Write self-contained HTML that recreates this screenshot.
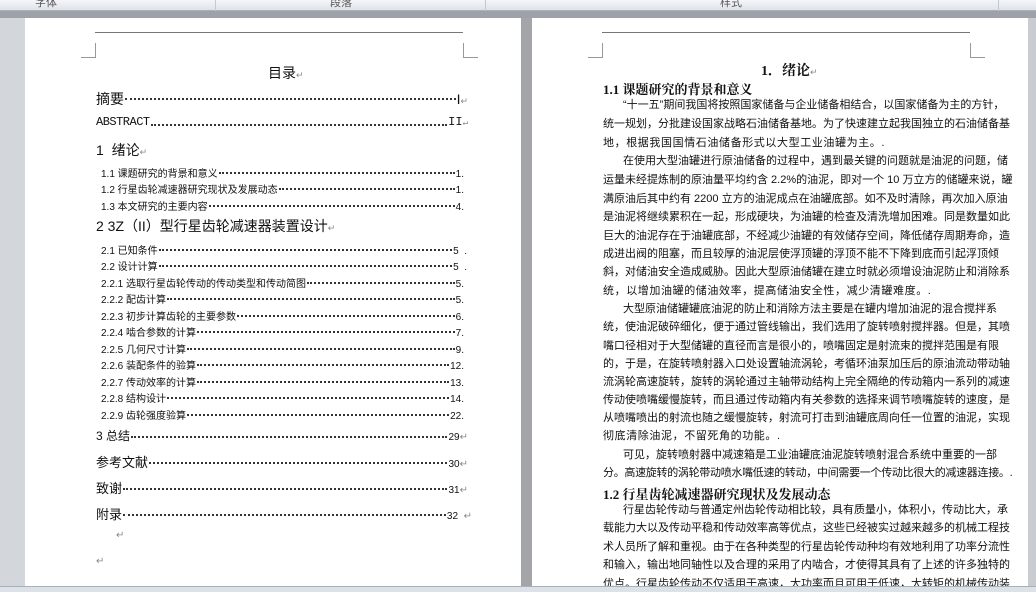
<!DOCTYPE html>
<html><head><meta charset="utf-8"><style>
*{margin:0;padding:0;box-sizing:border-box}
body{width:1036px;height:592px;overflow:hidden;background:#9ea2a8;position:relative;font-family:"Liberation Serif","Noto Serif CJK SC","Noto Sans CJK SC",serif;color:#111}
.tb{position:absolute;left:0;top:0;width:1036px;height:11px;background:linear-gradient(#f4f6f9,#dfe3e9);border-bottom:1px solid #a9b0ba}
.tb span{position:absolute;top:-6px;font-size:11px;color:#555;font-family:"Liberation Sans","Noto Sans CJK SC",sans-serif}
.sep{position:absolute;top:0;width:1px;height:11px;background:#c4c9d0}
.page{position:absolute;top:18px;height:568px;background:#fff}
.hl{position:absolute;height:1px;background:#777}
.crn{position:absolute;width:15px;height:15px;border-color:#999;border-style:solid}
.t{position:absolute;white-space:nowrap}
.toc{position:absolute;display:flex;align-items:baseline;white-space:nowrap;font-family:"Liberation Sans","Noto Sans CJK SC",sans-serif}
.toc .d{flex:1;overflow:hidden;border-bottom:2px dotted #333;height:0;margin:0 1px;align-self:center;position:relative;top:1px}
.s{font-size:10px;height:14px}
.b{font-size:14px;height:18px}
.r{font-family:"Liberation Sans","Noto Sans CJK SC",sans-serif;font-size:11px;position:absolute;left:603px;width:367px;white-space:nowrap;line-height:14px}
.j{text-align:justify;text-align-last:justify}
.status{position:absolute;left:0;top:586px;width:1036px;height:6px;background:#dde2e9;border-top:1px solid #a9b0ba}
</style></head><body>
<div class="tb"><span style="left:35px">字体</span><div class="sep" style="left:215px"></div><span style="left:330px">段落</span><div class="sep" style="left:485px"></div><span style="left:720px">样式</span><div class="sep" style="left:998px"></div></div>
<div class="page" style="left:25px;width:496px"></div>
<div class="page" style="left:532px;width:496px"></div>
<div style="position:absolute;left:521px;top:18px;width:11px;height:568px;background:#a3a5a8"></div>
<div style="position:absolute;left:0;top:18px;width:25px;height:568px;background:#d3d6da"></div>
<div style="position:absolute;left:1028px;top:18px;width:8px;height:568px;background:#c8cbcf"></div>
<div class="hl" style="left:95px;top:32px;width:368px"></div>
<div class="crn" style="left:81px;top:43px;border-width:0 1px 1px 0"></div>
<div class="crn" style="left:463px;top:43px;border-width:0 0 1px 1px"></div>
<div class="hl" style="left:602px;top:32px;width:368px"></div>
<div class="crn" style="left:588px;top:43px;border-width:0 1px 1px 0"></div>
<div class="crn" style="left:970px;top:43px;border-width:0 0 1px 1px"></div>
<div class="t" style="left:268px;top:63px;font-size:14px;font-family:'Liberation Sans','Noto Sans CJK SC',sans-serif">目录<span style="font-size:9px;color:#888">↵</span></div>
<div class="toc b" style="left:96px;top:89px;width:372px"><span>摘要</span><span class="d"></span><span>I<span style="font-size:9px;color:#888">↵</span></span></div>
<div class="toc b" style="left:96px;top:115px;width:372px;font-family:'Liberation Mono',monospace"><span style="font-size:12px;letter-spacing:-0.5px">ABSTRACT</span><span class="d"></span><span style="font-size:12px">II<span style="font-size:9px;color:#888">↵</span></span></div>
<div class="t" style="left:96px;top:140px;font-size:14px;font-family:'Liberation Sans','Noto Sans CJK SC',sans-serif">1 &nbsp;绪论<span style="font-size:9px;color:#888">↵</span></div>
<div class="toc s" style="left:101px;top:165px;width:363px"><span>1.1 课题研究的背景和意义</span><span class="d"></span><span>1.</span></div>
<div class="toc s" style="left:101px;top:181px;width:363px"><span>1.2 行星齿轮减速器研究现状及发展动态</span><span class="d"></span><span>1.</span></div>
<div class="toc s" style="left:101px;top:198px;width:363px"><span>1.3 本文研究的主要内容</span><span class="d"></span><span>4.</span></div>
<div class="t" style="left:96px;top:216px;font-size:14px;font-family:'Liberation Sans','Noto Sans CJK SC',sans-serif">2 3Z（II）型行星齿轮减速器装置设计<span style="font-size:9px;color:#888">↵</span></div>
<div class="toc s" style="left:101px;top:242px;width:366px"><span>2.1 已知条件</span><span class="d"></span><span>5 &nbsp;.</span></div>
<div class="toc s" style="left:101px;top:258px;width:366px"><span>2.2 设计计算</span><span class="d"></span><span>5 &nbsp;.</span></div>
<div class="toc s" style="left:101px;top:275px;width:363px"><span>2.2.1 选取行星齿轮传动的传动类型和传动简图</span><span class="d"></span><span>5.</span></div>
<div class="toc s" style="left:101px;top:291px;width:363px"><span>2.2.2 配齿计算</span><span class="d"></span><span>5.</span></div>
<div class="toc s" style="left:101px;top:308px;width:363px"><span>2.2.3 初步计算齿轮的主要参数</span><span class="d"></span><span>6.</span></div>
<div class="toc s" style="left:101px;top:324px;width:363px"><span>2.2.4 啮合参数的计算</span><span class="d"></span><span>7.</span></div>
<div class="toc s" style="left:101px;top:341px;width:363px"><span>2.2.5 几何尺寸计算</span><span class="d"></span><span>9.</span></div>
<div class="toc s" style="left:101px;top:357px;width:363px"><span>2.2.6 装配条件的验算</span><span class="d"></span><span>12.</span></div>
<div class="toc s" style="left:101px;top:374px;width:363px"><span>2.2.7 传动效率的计算</span><span class="d"></span><span>13.</span></div>
<div class="toc s" style="left:101px;top:390px;width:363px"><span>2.2.8 结构设计</span><span class="d"></span><span>14.</span></div>
<div class="toc s" style="left:101px;top:407px;width:363px"><span>2.2.9 齿轮强度验算</span><span class="d"></span><span>22.</span></div>
<div class="toc" style="left:96px;top:427px;width:372px;font-size:12px"><span>3 总结</span><span class="d"></span><span style="font-size:10px">29<span style="color:#888">↵</span></span></div>
<div class="toc" style="left:96px;top:452px;width:372px;font-size:13px"><span>参考文献</span><span class="d"></span><span style="font-size:10px">30<span style="color:#888">↵</span></span></div>
<div class="toc" style="left:96px;top:478px;width:372px;font-size:13px"><span>致谢</span><span class="d"></span><span style="font-size:10px">31<span style="color:#888">↵</span></span></div>
<div class="toc" style="left:96px;top:504px;width:376px;font-size:13px"><span>附录</span><span class="d"></span><span style="font-size:10px">32 &nbsp;<span style="color:#888">↵</span></span></div>
<div class="t" style="left:116px;top:530px;font-size:10px;color:#888">↵</div>
<div class="t" style="left:96px;top:556px;font-size:10px;color:#888">↵</div>
<div class="t" style="left:761px;top:60px;font-size:14px;font-weight:bold">1．绪论<span style="font-size:9px;color:#888;font-weight:normal">↵</span></div>
<div class="t" style="left:603px;top:79px;font-size:13px;font-weight:bold">1.1 课题研究的背景和意义</div>
<div class="r j" style="top:98px;padding-left:20px">“十一五”期间我国将按照国家储备与企业储备相结合，以国家储备为主的方针，</div>
<div class="r j" style="top:117px">统一规划，分批建设国家战略石油储备基地。为了快速建立起我国独立的石油储备基</div>
<div class="r" style="top:136px;letter-spacing:0.6px">地，根据我国国情石油储备形式以大型工业油罐为主。.</div>
<div class="r j" style="top:154px;padding-left:20px">在使用大型油罐进行原油储备的过程中，遇到最关键的问题就是油泥的问题，储</div>
<div class="r j" style="top:173px">运量未经提炼制的原油量平均约含 2.2%的油泥，即对一个 10 万立方的储罐来说，罐</div>
<div class="r j" style="top:192px">满原油后其中约有 2200 立方的油泥成点在油罐底部。如不及时清除，再次加入原油</div>
<div class="r j" style="top:210px">是油泥将继续累积在一起，形成硬块，为油罐的检查及清洗增加困难。同是数量如此</div>
<div class="r j" style="top:229px">巨大的油泥存在于油罐底部，不经减少油罐的有效储存空间，降低储存周期寿命，造</div>
<div class="r j" style="top:247px">成进出阀的阻塞，而且较厚的油泥层使浮顶罐的浮顶不能不下降到底而引起浮顶倾</div>
<div class="r j" style="top:265px">斜，对储油安全造成威胁。因此大型原油储罐在建立时就必须增设油泥防止和消除系</div>
<div class="r" style="top:284px;letter-spacing:0.6px">统，以增加油罐的储油效率，提高储油安全性，减少清罐难度。.</div>
<div class="r j" style="top:302px;padding-left:20px">大型原油储罐罐底油泥的防止和消除方法主要是在罐内增加油泥的混合搅拌系</div>
<div class="r j" style="top:320px">统，使油泥破碎细化，便于通过管线输出，我们选用了旋转喷射搅拌器。但是，其喷</div>
<div class="r j" style="top:339px">嘴口径相对于大型储罐的直径而言是很小的，喷嘴固定是射流束的搅拌范围是有限</div>
<div class="r j" style="top:357px">的，于是，在旋转喷射器入口处设置轴流涡轮，考循环油泵加压后的原油流动带动轴</div>
<div class="r j" style="top:375px">流涡轮高速旋转，旋转的涡轮通过主轴带动结构上完全隔绝的传动箱内一系列的减速</div>
<div class="r j" style="top:393px">传动使喷嘴缓慢旋转，而且通过传动箱内有关参数的选择来调节喷嘴旋转的速度，是</div>
<div class="r j" style="top:411px">从喷嘴喷出的射流也随之缓慢旋转，射流可打击到油罐底周向任一位置的油泥，实现</div>
<div class="r" style="top:429px;letter-spacing:0.6px">彻底清除油泥，不留死角的功能。.</div>
<div class="r j" style="top:448px;padding-left:20px">可见，旋转喷射器中减速箱是工业油罐底油泥旋转喷射混合系统中重要的一部</div>
<div class="r" style="top:466px;letter-spacing:-0.3px">分。高速旋转的涡轮带动喷水嘴低速的转动，中间需要一个传动比很大的减速器连接。.</div>
<div class="t" style="left:603px;top:484px;font-size:13px;font-weight:bold">1.2 行星齿轮减速器研究现状及发展动态</div>
<div class="r j" style="top:503px;padding-left:20px">行星齿轮传动与普通定州齿轮传动相比较，具有质量小，体积小，传动比大，承</div>
<div class="r j" style="top:521px">载能力大以及传动平稳和传动效率高等优点，这些已经被实过越来越多的机械工程技</div>
<div class="r j" style="top:540px">术人员所了解和重视。由于在各种类型的行星齿轮传动种均有效地利用了功率分流性</div>
<div class="r j" style="top:558px">和输入，输出地同轴性以及合理的采用了内啮合，才使得其具有了上述的许多独特的</div>
<div class="r j" style="top:577px">优点。行星齿轮传动不仅适用于高速，大功率而且可用于低速，大转矩的机械传动装</div>
<div class="status"></div>
</body></html>
